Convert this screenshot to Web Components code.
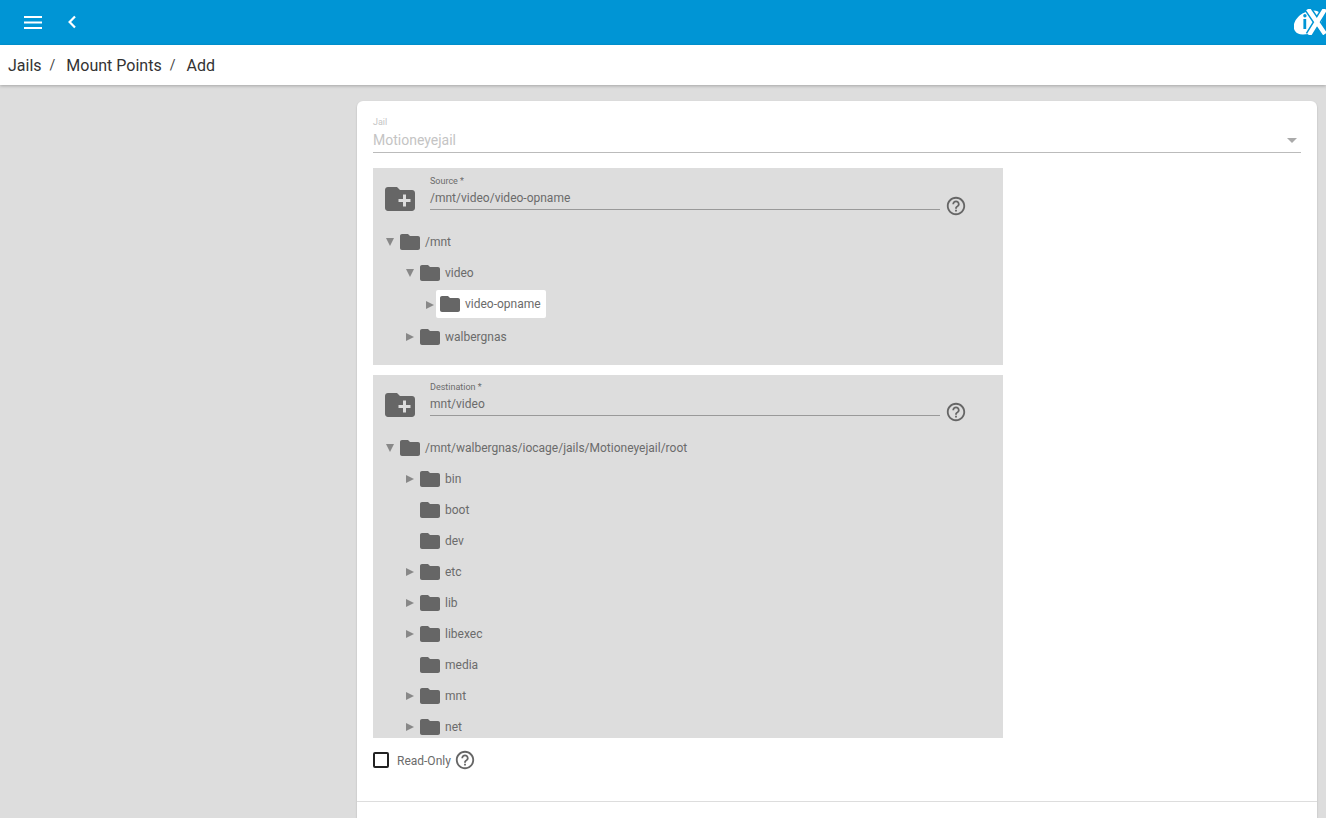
<!DOCTYPE html>
<html>
<head>
<meta charset="utf-8">
<title>Jails / Mount Points / Add</title>
<style>
  html, body { margin: 0; height: 100%; overflow: hidden; }
  body { background: #ddd; font-family: Roboto, "Liberation Sans", sans-serif; color: #6b6b6b; }
</style>
</head>
<body>
<app-shell>
  <top-bar></top-bar>
  <bread-crumbs items="Jails,Mount Points,Add"></bread-crumbs>
  <form-card>
    <jail-select label="Jail" value="Motioneyejail"></jail-select>

    <explorer-panel label="Source *" value="/mnt/video/video-opname" height="197" top="7">
      <tree-node label="/mnt" state="open">
        <tree-node label="video" state="open">
          <tree-node label="video-opname" state="closed" selected></tree-node>
        </tree-node>
        <tree-node label="walbergnas" state="closed"></tree-node>
      </tree-node>
    </explorer-panel>

    <explorer-panel label="Destination *" value="mnt/video" height="363" top="6">
      <tree-node label="/mnt/walbergnas/iocage/jails/Motioneyejail/root" state="open">
        <tree-node label="bin" state="closed"></tree-node>
        <tree-node label="boot"></tree-node>
        <tree-node label="dev"></tree-node>
        <tree-node label="etc" state="closed"></tree-node>
        <tree-node label="lib" state="closed"></tree-node>
        <tree-node label="libexec" state="closed"></tree-node>
        <tree-node label="media"></tree-node>
        <tree-node label="mnt" state="closed"></tree-node>
        <tree-node label="net" state="closed"></tree-node>
      </tree-node>
    </explorer-panel>

    <check-field label="Read-Only"></check-field>
  </form-card>
</app-shell>

<script>
const ICONS = {
  menu: '<svg width="18" height="13" viewBox="0 0 18 13" fill="#fff"><rect y="0" width="18" height="2"/><rect y="5.5" width="18" height="2"/><rect y="11" width="18" height="2"/></svg>',
  back: '<svg width="10" height="14" viewBox="0 0 10 14" fill="none" stroke="#fff" stroke-width="2.2"><path d="M8 1.5 2.6 7 8 12.5"/></svg>',
  folder: '<svg width="20" height="16" viewBox="2 4 20 16" fill="#666"><path d="M10 4H4c-1.1 0-2 .9-2 2v12c0 1.1.9 2 2 2h16c1.1 0 2-.9 2-2V8c0-1.1-.9-2-2-2h-8l-2-2z"/></svg>',
  newFolder: '<svg width="30" height="24" viewBox="2 4 20 16" fill="#666"><path d="M20 6h-8l-2-2H4c-1.11 0-1.99.89-1.99 2L2 18c0 1.11.89 2 2 2h16c1.11 0 2-.89 2-2V8c0-1.11-.89-2-2-2zm-1 8h-3v3h-2v-3h-3v-2h3V9h2v3h3v2z"/></svg>',
  help: '<svg width="22" height="22" viewBox="0 0 24 24" fill="#666"><path d="M11 18h2v-2h-2v2zm1-16C6.48 2 2 6.48 2 12s4.48 10 10 10 10-4.48 10-10S17.52 2 12 2zm0 18c-4.41 0-8-3.59-8-8s3.59-8 8-8 8 3.59 8 8-3.59 8-8 8zm0-14c-2.21 0-4 1.79-4 4h2c0-1.1.9-2 2-2s2 .9 2 2c0 2-3 1.75-3 5h2c0-2.25 3-2.5 3-5 0-2.21-1.79-4-4-4z"/></svg>',
  logo: '<svg width="32" height="26" viewBox="0 0 32 26"><ellipse cx="14" cy="13.5" rx="15.5" ry="10.5" transform="rotate(-32 14 13.5)" fill="#fff"/><path d="M14 0 31 25M31 0 15 26" stroke="#0095d5" stroke-width="7.5" fill="none"/><path d="M14 0 31 25M31 0 15 26" stroke="#fff" stroke-width="4.5" fill="none"/><rect x="9.4" y="10" width="2.8" height="10" fill="#0095d5"/><circle cx="10.9" cy="6.8" r="1.7" fill="#0095d5"/></svg>'
};

class AppShell extends HTMLElement {
  constructor() {
    super();
    this.attachShadow({ mode: "open" });
    this.shadowRoot.innerHTML = `
    <style>
      :host { display: flex; flex-direction: column; height: 818px; overflow: hidden; }
    </style>
    <slot></slot>`;
  }
}

class TopBar extends HTMLElement {
  constructor() {
    super();
    this.attachShadow({ mode: "open" });
    this.shadowRoot.innerHTML = `
    <style>
      :host { display: flex; flex: none; align-items: center; box-sizing: border-box; height: 45px; padding: 0 0 1px 24px; background: #0095d5; }
      .menu { display: flex; }
      .back { display: flex; margin-left: 25px; }
      .logo { display: flex; margin-left: auto; margin-top: -1px; }
    </style>
    <span class="menu">${ICONS.menu}</span>
    <span class="back">${ICONS.back}</span>
    <span class="logo">${ICONS.logo}</span>`;
  }
}

class BreadCrumbs extends HTMLElement {
  constructor() {
    super();
    this.attachShadow({ mode: "open" });
    const items = this.getAttribute("items").split(",");
    const parts = items.map((t, i) =>
      `<span class="item">${t}</span>` + (i < items.length - 1 ? '<span class="sep">/</span>' : "")
    );
    this.shadowRoot.innerHTML = `
    <style>
      :host { display: flex; flex: none; align-items: center; height: 40px; padding-left: 8px; background: #fff;
        box-shadow: 0 1px 3px rgba(0,0,0,.25); font-size: 16px; color: #333; position: relative; }
      .sep { margin: 0 11px 0 8px; font-size: 14px; color: #444; }
    </style>
    ${parts.join("")}`;
  }
}

class FormCard extends HTMLElement {
  constructor() {
    super();
    this.attachShadow({ mode: "open" });
    this.shadowRoot.innerHTML = `
    <style>
      :host { display: block; flex: none; box-sizing: border-box; width: 960px; height: 760px; margin: 16px 0 0 357px;
        background: #fff; border-radius: 6px; box-shadow: 0 1px 2px rgba(0,0,0,.2); }
      .body { display: flex; flex-direction: column; gap: 10px; box-sizing: border-box; height: 701px;
        padding: 15px 16px 0; border-bottom: 1px solid #ddd; }
    </style>
    <div class="body"><slot></slot></div>`;
  }
}

class JailSelect extends HTMLElement {
  constructor() {
    super();
    this.attachShadow({ mode: "open" });
    this.shadowRoot.innerHTML = `
    <style>
      :host { display: block; height: 37px; margin-bottom: 5px; box-sizing: border-box; border-bottom: 1px solid #bbb; color: #c4c4c4; }
      .label { font-size: 9px; line-height: 12px; }
      .row { display: flex; align-items: center; justify-content: space-between; margin-top: 2px; font-size: 14px; line-height: 20px; }
      .arrow { width: 0; height: 0; margin-right: 4px; border: 5px solid transparent; border-top: 5px solid #aaa; border-bottom: 0; }
    </style>
    <div class="label">${this.getAttribute("label")}</div>
    <div class="row"><span>${this.getAttribute("value")}</span><span class="arrow"></span></div>`;
  }
}

class ExplorerPanel extends HTMLElement {
  constructor() {
    super();
    this.attachShadow({ mode: "open" });
    const top = Number(this.getAttribute("top"));
    this.shadowRoot.innerHTML = `
    <style>
      :host { display: block; flex: none; width: 630px; height: ${this.getAttribute("height")}px; overflow: hidden; background: #ddd; }
      .head { display: flex; height: ${51 + top}px; box-sizing: border-box; padding: ${top}px 0 0 12px; }
      .plus { display: flex; margin-top: 12px; height: 24px; }
      .field { width: 510px; height: 35px; margin-left: 15px; border-bottom: 1px solid #999; box-sizing: border-box; }
      .label { font-size: 9px; line-height: 12px; color: #6b6b6b; }
      .value { margin-top: 3px; font-size: 12px; line-height: 16px; color: #6b6b6b; }
      .help { display: flex; margin: 20px 0 0 5px; height: 22px; }
      .tree { padding-left: 12px; }
    </style>
    <div class="head">
      <span class="plus">${ICONS.newFolder}</span>
      <div class="field">
        <div class="label">${this.getAttribute("label")}</div>
        <div class="value">${this.getAttribute("value")}</div>
      </div>
      <span class="help">${ICONS.help}</span>
    </div>
    <div class="tree"><slot></slot></div>`;
  }
}

class TreeNode extends HTMLElement {
  constructor() {
    super();
    this.attachShadow({ mode: "open" });
    const state = this.getAttribute("state");
    const selected = this.hasAttribute("selected");
    this.shadowRoot.innerHTML = `
    <style>
      :host { display: block; font-size: 12px; color: #6b6b6b; }
      .row { display: flex; align-items: center; height: ${selected ? 33 : 31}px; }
      .toggle { flex: none; display: flex; align-items: center; justify-content: center; width: 11px; margin-right: 4px; }
      .open { width: 0; height: 0; border: 4px solid transparent; border-top: 8px solid #888; border-bottom: 0; margin-left: -1px; }
      .closed { width: 0; height: 0; border: 4px solid transparent; border-left: 8px solid #888; border-right: 0; margin-left: -1px; }
      .content { display: flex; align-items: center; height: 28px; padding: 0 5px 0 0; border-radius: 2px; }
      .content.sel { background: #fff; padding: 0 5px 0 4px; margin: 0 0 2px -4px; }
      .folder { display: flex; margin-right: 5px; }
      .kids { padding-left: 20px; }
    </style>
    <div class="row">
      <span class="toggle"><span class="${state || ""}"></span></span>
      <div class="content ${selected ? "sel" : ""}">
        <span class="folder">${ICONS.folder}</span>
        <span>${this.getAttribute("label")}</span>
      </div>
    </div>
    <div class="kids"><slot></slot></div>`;
  }
}

class CheckField extends HTMLElement {
  constructor() {
    super();
    this.attachShadow({ mode: "open" });
    this.shadowRoot.innerHTML = `
    <style>
      :host { display: flex; align-items: center; height: 22px; margin-top: 1px; font-size: 12px; color: #6b6b6b; }
      .box { box-sizing: border-box; width: 16px; height: 16px; border: 2px solid #222; border-radius: 2px; margin-right: 8px; }
      .text { padding-top: 2px; }
      .help { display: flex; margin-left: 3px; }
    </style>
    <span class="box"></span>
    <span class="text">${this.getAttribute("label")}</span>
    <span class="help">${ICONS.help}</span>`;
  }
}

customElements.define("app-shell", AppShell);
customElements.define("top-bar", TopBar);
customElements.define("bread-crumbs", BreadCrumbs);
customElements.define("form-card", FormCard);
customElements.define("jail-select", JailSelect);
customElements.define("explorer-panel", ExplorerPanel);
customElements.define("tree-node", TreeNode);
customElements.define("check-field", CheckField);
</script>
</body>
</html>
